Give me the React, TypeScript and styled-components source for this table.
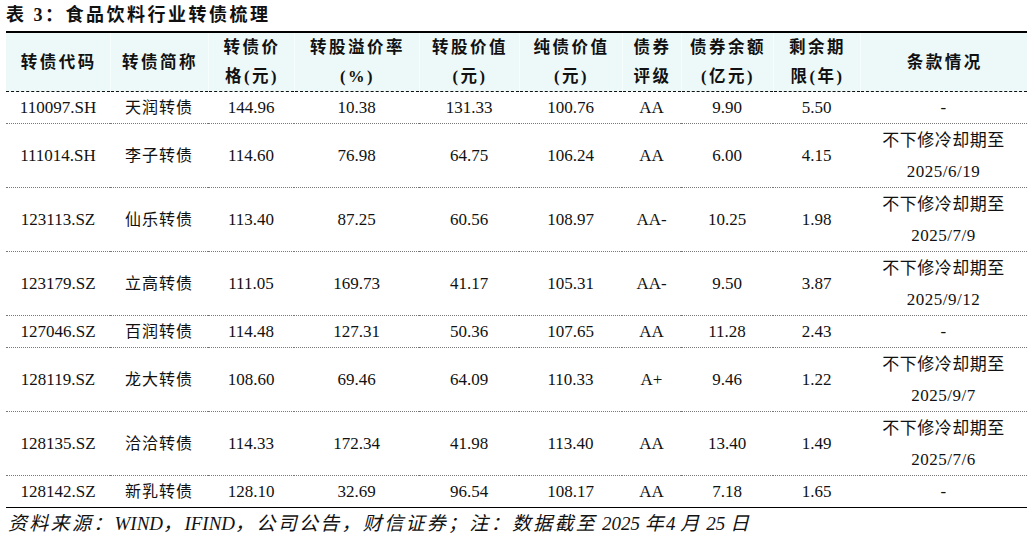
import styled, { createGlobalStyle } from "styled-components";

const GlobalStyle = createGlobalStyle`
  html, body {
    margin: 0;
    padding: 0;
    background: #fff;
  }
  body {
    font-family: "Liberation Serif", "Noto Sans CJK SC", serif;
    color: #111;
  }
`;

const Page = styled.div`
  width: 1033px;
  padding: 0 6px;
  box-sizing: border-box;
`;

const Title = styled.h1`
  margin: 0;
  height: 31px;
  line-height: 31px;
  font-size: 18px;
  font-weight: bold;
  letter-spacing: 2.5px;
  white-space: nowrap;
`;

const Table = styled.table`
  width: 1021px;
  border-collapse: collapse;
  table-layout: fixed;
  border-top: 2px solid #000;
  border-bottom: 1.5px solid #000;
`;

const Col = styled.col<{ $w: number }>`
  width: ${p => p.$w}px;
`;

const HeadRow = styled.tr`
  height: 58px;
  background: #edf9f9;
  border-bottom: 1px dashed #111;
`;

const HeadCell = styled.th`
  padding: 0 0 0 2px;
  font-size: 16.5px;
  font-weight: bold;
  letter-spacing: 2.5px;
  line-height: 29px;
  text-align: center;
  vertical-align: middle;
  border-left: 1px solid #f7fdfd;
  white-space: nowrap;

  &:first-child {
    border-left: none;
  }
`;

const Row = styled.tr<{ $tall: boolean }>`
  height: ${p => (p.$tall ? 64 : 26)}px;
  border-bottom: 1px dotted #777;

  &:last-child {
    border-bottom: none;
  }
`;

const Cell = styled.td`
  padding: 0;
  font-size: 17px;
  line-height: 31px;
  text-align: center;
  vertical-align: middle;
  white-space: nowrap;
`;

const NameCell = styled(Cell)`
  font-size: 16px;
  letter-spacing: 1px;
`;

const TermCell = styled(Cell)`
  letter-spacing: 0.5px;
`;

const Source = styled.p`
  margin: 0;
  padding-left: 2px;
  height: 32px;
  line-height: 32px;
  font-size: 19px;
  font-style: italic;
  white-space: pre;
`;

const Han = styled.span`
  letter-spacing: 2.3px;
`;

const Latin = styled.span`
  letter-spacing: 0;
`;

const widths = [104, 98, 86, 125, 100, 103, 59, 92, 87, 167];

const headers: string[][] = [
  ["转债代码"],
  ["转债简称"],
  ["转债价", "格(元)"],
  ["转股溢价率", "(%)"],
  ["转股价值", "(元)"],
  ["纯债价值", "(元)"],
  ["债券", "评级"],
  ["债券余额", "(亿元)"],
  ["剩余期", "限(年)"],
  ["条款情况"],
];

type Bond = {
  code: string;
  name: string;
  price: string;
  premium: string;
  convValue: string;
  bondValue: string;
  rating: string;
  balance: string;
  remain: string;
  term?: string;
};

const bonds: Bond[] = [
  { code: "110097.SH", name: "天润转债", price: "144.96", premium: "10.38", convValue: "131.33", bondValue: "100.76", rating: "AA", balance: "9.90", remain: "5.50" },
  { code: "111014.SH", name: "李子转债", price: "114.60", premium: "76.98", convValue: "64.75", bondValue: "106.24", rating: "AA", balance: "6.00", remain: "4.15", term: "2025/6/19" },
  { code: "123113.SZ", name: "仙乐转债", price: "113.40", premium: "87.25", convValue: "60.56", bondValue: "108.97", rating: "AA-", balance: "10.25", remain: "1.98", term: "2025/7/9" },
  { code: "123179.SZ", name: "立高转债", price: "111.05", premium: "169.73", convValue: "41.17", bondValue: "105.31", rating: "AA-", balance: "9.50", remain: "3.87", term: "2025/9/12" },
  { code: "127046.SZ", name: "百润转债", price: "114.48", premium: "127.31", convValue: "50.36", bondValue: "107.65", rating: "AA", balance: "11.28", remain: "2.43" },
  { code: "128119.SZ", name: "龙大转债", price: "108.60", premium: "69.46", convValue: "64.09", bondValue: "110.33", rating: "A+", balance: "9.46", remain: "1.22", term: "2025/9/7" },
  { code: "128135.SZ", name: "洽洽转债", price: "114.33", premium: "172.34", convValue: "41.98", bondValue: "113.40", rating: "AA", balance: "13.40", remain: "1.49", term: "2025/7/6" },
  { code: "128142.SZ", name: "新乳转债", price: "128.10", premium: "32.69", convValue: "96.54", bondValue: "108.17", rating: "AA", balance: "7.18", remain: "1.65" },
];

export default function App() {
  return (
    <Page>
      <GlobalStyle />
      <Title>表 3：食品饮料行业转债梳理</Title>
      <Table>
        <colgroup>
          {widths.map((w, i) => (
            <Col key={i} $w={w} />
          ))}
        </colgroup>
        <thead>
          <HeadRow>
            {headers.map(lines => (
              <HeadCell key={lines[0]}>
                {lines.map((l, i) => (
                  <div key={i}>{l}</div>
                ))}
              </HeadCell>
            ))}
          </HeadRow>
        </thead>
        <tbody>
          {bonds.map(b => (
            <Row key={b.code} $tall={!!b.term}>
              <Cell>{b.code}</Cell>
              <NameCell>{b.name}</NameCell>
              <Cell>{b.price}</Cell>
              <Cell>{b.premium}</Cell>
              <Cell>{b.convValue}</Cell>
              <Cell>{b.bondValue}</Cell>
              <Cell>{b.rating}</Cell>
              <Cell>{b.balance}</Cell>
              <Cell>{b.remain}</Cell>
              <TermCell>
                {b.term ? (
                  <>
                    <div>不下修冷却期至</div>
                    <div>{b.term}</div>
                  </>
                ) : (
                  "-"
                )}
              </TermCell>
            </Row>
          ))}
        </tbody>
      </Table>
      <Source>
        <Han>资料来源：</Han>
        <Latin>WIND</Latin>
        <Han>，</Han>
        <Latin>IFIND</Latin>
        <Han>，公司公告，财信证券；注：数据截至</Han>
        <Latin> 2025 </Latin>
        <Han>年</Han>
        <Latin>4 </Latin>
        <Han>月</Han>
        <Latin> 25 </Latin>
        <Han>日</Han>
      </Source>
    </Page>
  );
}
